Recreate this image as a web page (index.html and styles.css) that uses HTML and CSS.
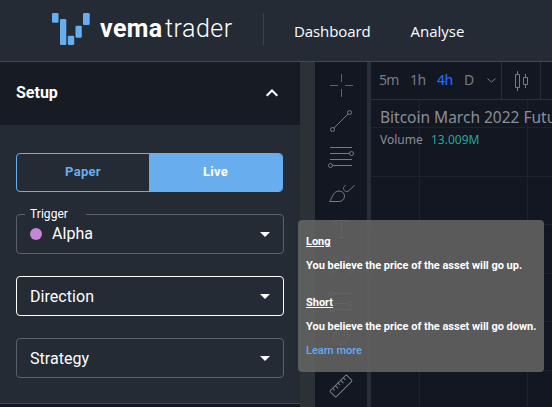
FILE: index.html
```html
<!DOCTYPE html>
<html lang="en">
<head>
<meta charset="utf-8">
<title>vematrader</title>
<link rel="stylesheet" href="styles.css">
</head>
<body>
<header class="header">
  <div class="brand">
    <svg class="logo" width="38" height="33" viewBox="0 0 38 33">
      <rect x="0" y="0" width="6.5" height="9.7" rx="1.3"/>
      <rect x="8" y="6" width="6.3" height="26" rx="1.3"/>
      <rect x="15.8" y="22.7" width="6.4" height="9.3" rx="1.3"/>
      <rect x="23.5" y="12.7" width="6.3" height="12" rx="1.3"/>
      <rect x="31" y="0" width="6.7" height="12" rx="1.3"/>
    </svg>
    <span class="brand-bold">vema</span><span class="brand-light">trader</span>
  </div>
  <nav class="nav"><a class="nav-dash">Dashboard</a><a class="nav-analyse">Analyse</a></nav>
</header>
<main class="main">
  <aside class="panel">
    <div class="panel-head"><span>Setup</span>
      <svg width="14" height="10" viewBox="0 0 14 10"><path d="M1.7 7.7 7 2.5l5.3 5.2" fill="none" stroke="#fff" stroke-width="2"/></svg>
    </div>
    <div class="panel-body">
      <div class="toggle"><div class="paper">Paper</div><div class="live">Live</div></div>
      <div class="field trigger"><span class="label">Trigger</span><i class="dot"></i><span class="value">Alpha</span><b class="arrow"></b></div>
      <div class="field active"><span>Direction</span><b class="arrow"></b></div>
      <div class="field"><span>Strategy</span><b class="arrow"></b></div>
    </div>
  </aside>
  <div class="gutter"></div>
  <div class="tools">
    <div class="tool cross"><svg viewBox="0 0 28 28"><path d="M3 14.5h8M18 14.5h8M14.5 3v8M14.5 18v8"/></svg></div>
    <div class="tool"><svg viewBox="0 0 28 28"><path d="M7 21 21 7"/><circle cx="5.5" cy="22.5" r="2"/><circle cx="22.5" cy="5.5" r="2"/></svg></div>
    <div class="tool"><svg viewBox="0 0 28 28"><path d="M3 4.500h22M3 10.500h19.500M3 16.500h22M5.500 22.500H25"/><circle cx="24.500" cy="10.500" r="2"/><circle cx="3.500" cy="22.500" r="2"/></svg></div>
    <div class="tool"><svg viewBox="0 0 28 28"><path d="M2.500 22.500C5 20.500 5.500 12 12 12c3.500 0 5.500 2.500 5.500 5.200 0 3-2.500 5.300-5.500 5.300zM18.700 6.500c-1.500.4-2.200 1.600-2.200 2.800 0 1.900 1.400 3.200 3.200 3.200 1.200 0 2-.5 2.800-1.300l5-5"/></svg></div>
    <div class="tool"><svg viewBox="0 0 28 28"><path d="M8.500 8V5.500h12V8M14.500 5.500v17M12 22.500h5"/></svg></div>
    <div class="tool"><svg viewBox="0 0 28 28"><path d="m6 21 3-12M10 9l4 5M16 13l3-4M21 9l2 8"/><circle cx="5.500" cy="22.500" r="2"/><circle cx="8.500" cy="6.500" r="2"/><circle cx="14.500" cy="15.500" r="2"/><circle cx="20.500" cy="7.500" r="2"/><circle cx="23.500" cy="19.500" r="2"/></svg></div>
    <div class="tool"><svg viewBox="0 0 28 28"><path d="M6 6.500h19M3 16.500h19M6 22.500h19"/><path d="m7 14 14-5" stroke-dasharray="1 3"/><circle cx="4.500" cy="6.500" r="2"/><circle cx="23.500" cy="16.500" r="2"/><circle cx="4.500" cy="22.500" r="2"/></svg></div>
    <div class="tool"><svg viewBox="0 0 28 28"><circle cx="14" cy="14" r="7.500"/><path d="M10 16c1.500 3 6.500 3 8 0M11 11v2M17 11v2"/></svg></div>
    <div class="tool-line"></div>
    <div class="tool"><svg viewBox="0 0 28 28"><g transform="rotate(-45 14 14)"><rect x="2.300" y="9.700" width="23.400" height="8.600" rx="1.200"/><path d="M6.500 9.700v3M10.200 9.700v4M14 9.700v3M17.800 9.700v4M21.500 9.700v3"/></g></svg></div>
  </div>
  <section class="chart">
    <div class="topbar">
      <div class="times"><span class="t1">5m</span><span class="t2">1h</span><span class="t3">4h</span><span class="t4">D</span>
        <svg width="9" height="5" viewBox="0 0 9 5"><path d="m.5.6 4 3.400 4-3.400"/></svg></div>
      <div class="style"><svg width="14" height="20" viewBox="0 0 14 20"><path d="M.5 3.500h4v13h-4zM2.500 0v3.500M2.500 16.500V20M8.500 6.500h4v7h-4zM10.500 3v3.500M10.500 13.500V17"/></svg></div>
    </div>
    <div class="plot">
      <svg class="grid" width="181" height="307" viewBox="0 0 181 307"><path d="M48.500 0v307M156.500 0v307M0 27.500h181M0 76.500h181M0 124.500h181M0 173.500h181M0 221.500h181M0 270.500h181"/></svg>
      <div class="legend"><div class="symbol">Bitcoin March 2022 Futures</div><div class="volume"><span>Volume</span><span class="vol-num">13.009M</span></div></div>
    </div>
  </section>
</main>
<div class="tooltip">
  <u>Long</u><p>You believe the price of the asset will go up.</p>
  <u class="short">Short</u><p>You believe the price of the asset will go down.</p>
  <a>Learn more</a>
</div>
</body>
</html>
```

FILE: styles.css
```css
* { box-sizing: border-box; }
body { margin: 0; width: 552px; height: 407px; overflow: hidden; background: #131722; color: #fff; font-family: Roboto, "Liberation Sans", sans-serif; }
svg { display: block; flex: none; }
.header { height: 62px; background: #242b35; border-bottom: 1px solid #464950; display: flex; }
.brand { width: 263px; padding-left: 52px; display: flex; white-space: nowrap; }
.logo { margin: 13px 10px 0 0; fill: #68adee; }
.brand-bold, .brand-light { font-size: 25px; line-height: 30px; margin-top: 14px; }
.brand-bold { width: 65px; font-weight: 700; letter-spacing: .4px; }
.brand-light { font-weight: 300; letter-spacing: .5px; }
.nav { height: 32px; margin-top: 13px; border-left: 1px solid #3c424d; display: flex; align-items: center; padding-left: 30px; gap: 40px; font: 15px/32px "Open Sans", sans-serif; padding-top: 3px; }
.nav-dash { letter-spacing: -.1px; }
.main { display: flex; height: 345px; }
.panel { width: 300px; height: 342px; background: #242b35; border-bottom: 1px solid #414852; flex: none; }
.panel-head { height: 63px; background: #171b23; display: flex; align-items: center; justify-content: space-between; padding: 0 21px 2px 16px; font-size: 16px; font-weight: 700; }
.panel-body { padding: 28px 16px 0; display: flex; flex-direction: column; }
.toggle { width: 267px; height: 39px; border: 1px solid #68adee; border-radius: 4px; display: flex; font-size: 13px; font-weight: 700; line-height: 35px; text-align: center; overflow: hidden; letter-spacing: .3px; }
.paper { width: 132px; color: #68adee; }
.live { flex: 1; background: #68adee; }
.field { height: 40px; border: 1px solid #59606a; border-radius: 4px; margin-top: 22px; padding: 0 13px; display: flex; align-items: center; font-size: 16px; letter-spacing: .05px; position: relative; }
.active { border-color: #fff; }
.label { position: absolute; left: 8px; top: -9px; width: 61px; padding-left: 5px; background: #242b35; font-size: 12px; line-height: 16px; }
.value { padding-bottom: 2px; }
.dot { width: 12px; height: 12px; border-radius: 50%; background: #c586d5; margin-right: 10px; }
.arrow { margin-left: auto; border: 5px solid transparent; border-top-color: #fff; border-bottom: 0; }
.gutter { width: 15px; background: #2a3137; flex: none; }
.tools { width: 56px; flex: none; border-right: 4px solid #2a2e39; padding-top: 5px; }
.tool { height: 36px; display: flex; align-items: center; justify-content: center; }
.tool svg { width: 28px; height: 28px; fill: none; stroke: #787b86; stroke-width: 1; }
.tool.cross svg { stroke: #2962ff; }
.tool-line { height: 1px; background: #2a2e39; margin: 6px 0; }
.chart { flex: 1; min-width: 0; font-family: "Noto Sans", sans-serif; }
.topbar { height: 38px; border-bottom: 1px solid #2a2e39; display: flex; color: #787b86; }
.topbar svg { fill: none; stroke: #787b86; }
.times { width: 131px; border-right: 1px solid #2a2e39; display: flex; align-items: center; padding-left: 8px; font-size: 14px; line-height: 34px; }
.times span { flex: none; padding-bottom: 2px; }
.t1 { width: 31px; letter-spacing: -.8px; } .t2 { width: 27px; letter-spacing: -.5px; } .t3 { width: 27px; color: #2962ff; font-weight: 500; letter-spacing: -.5px; } .t4 { width: 23px; }
.style { width: 39px; border-right: 1px solid #2a2e39; display: flex; align-items: center; padding-left: 13px; }
.plot { height: 307px; position: relative; }
.grid { position: absolute; left: 0; top: 0; stroke: #1e222d; fill: none; }
.legend { position: relative; padding: 5px 0 0 9px; color: #8b8e98; white-space: nowrap; }
.symbol { font-size: 15.5px; line-height: 24px; }
.volume { font-size: 12px; line-height: 22px; display: flex; }
.volume span:first-child { width: 51px; }
.vol-num { color: #26a69a; }
.tooltip { position: absolute; left: 298px; top: 220px; width: 246px; height: 152px; border-radius: 4px; background: rgba(97,97,97,.92); padding: 10px 8px; font-size: 11px; line-height: 24px; font-weight: 700; white-space: nowrap; letter-spacing: -.02px; }
.tooltip u, .tooltip p, .tooltip a { display: block; margin: 0; }
.tooltip .short { margin-top: 13px; }
.tooltip a { color: #68adee; font-weight: 500; }
```
